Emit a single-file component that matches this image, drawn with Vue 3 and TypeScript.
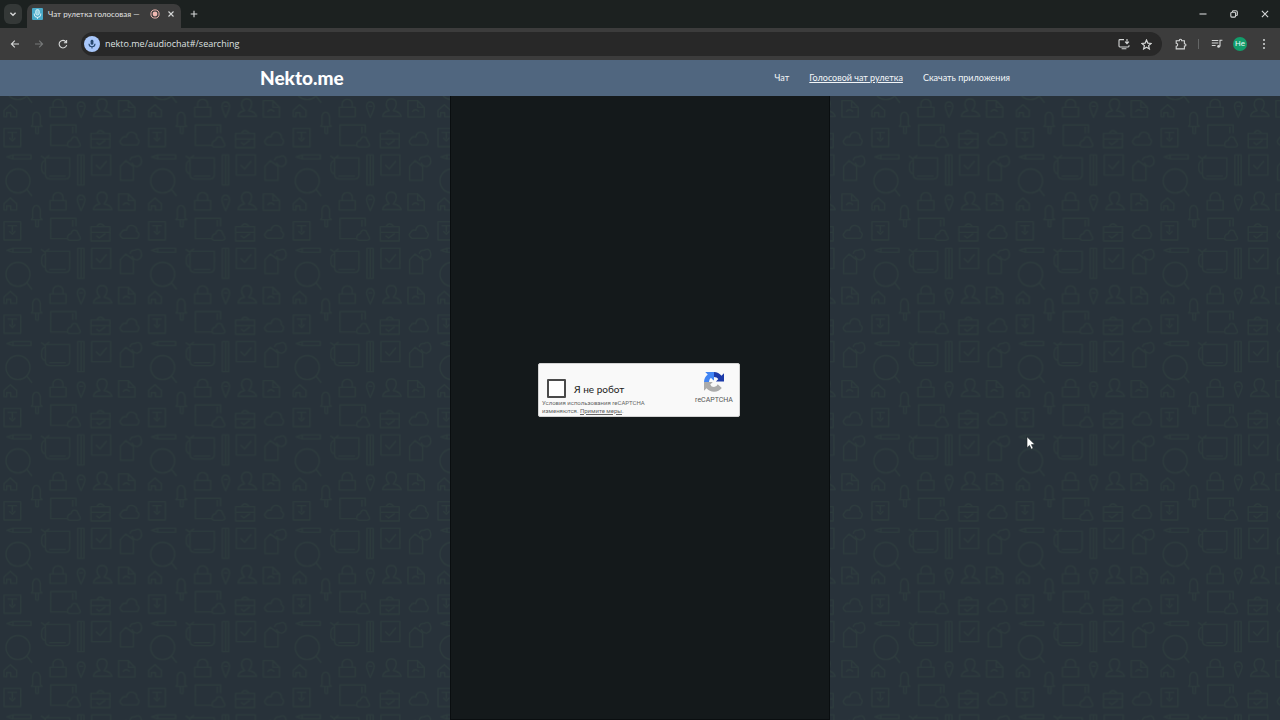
<script setup lang="ts">
import { ref } from 'vue'

interface NavLink {
  label: string
  href: string
  active: boolean
}

const address = ref('nekto.me/audiochat#/searching')
const checked = ref(false)
const links: NavLink[] = [
  { label: 'Чат', href: '#/chat', active: false },
  { label: 'Голосовой чат рулетка', href: '#/searching', active: true },
  { label: 'Скачать приложения', href: '#/apps', active: false },
]
</script>

<template>
  <div class="window">
    <div class="tabstrip">
      <button class="tab-search" aria-label="Поиск вкладок">
        <svg width="8" height="8" viewBox="0 0 8 8"><path d="M1.4 2.7 4 5.3 6.6 2.7" /></svg>
      </button>
      <div class="tab">
        <svg class="favicon" width="11" height="12" viewBox="0 0 11 12">
          <rect width="11" height="12" rx="1" fill="#48a9c8" />
          <rect x="3.7" y="1.5" width="3.6" height="5.6" rx="1.8" fill="#8fd0e2" stroke="#e2f5fa" stroke-width=".8" />
          <path d="M2.2 5.5v.6a3.3 3.3 0 0 0 6.6 0v-.6M5.5 9.2v1.6" fill="none" stroke="#e2f5fa" />
        </svg>
        <span class="tab-title">Чат рулетка голосовая —</span>
        <svg class="recording" width="10" height="10" viewBox="0 0 10 10">
          <circle cx="5" cy="5" r="4.1" fill="none" stroke="#e9b4ae" />
          <circle cx="5" cy="5" r="2.4" fill="#f0b8b1" />
        </svg>
        <button class="tab-close" aria-label="Закрыть вкладку">
          <svg width="8" height="8" viewBox="0 0 8 8"><path d="m1.5 1.5 5 5m0-5-5 5" /></svg>
        </button>
      </div>
      <button class="new-tab" aria-label="Новая вкладка">
        <svg width="8" height="8" viewBox="0 0 8 8"><path d="M4 .7v6.6M.7 4h6.6" /></svg>
      </button>
      <div class="window-buttons">
        <button aria-label="Свернуть"><svg width="8" height="8" viewBox="0 0 8 8"><path d="M.5 4h7" /></svg></button>
        <button aria-label="Восстановить">
          <svg width="8" height="8" viewBox="0 0 8 8"><rect x=".8" y="2.3" width="4.8" height="4.8" rx="1" /><path d="M2.5 1.9V1.6q0-.9.9-.9H6q1.3 0 1.3 1.3v2.7q0 .8-.8.8h-.4" /></svg>
        </button>
        <button aria-label="Закрыть"><svg width="8" height="8" viewBox="0 0 8 8"><path d="m.9.9 6.2 6.2m0-6.2L.9 7.1" /></svg></button>
      </div>
    </div>

    <div class="toolbar">
      <button aria-label="Назад"><svg width="10" height="10" viewBox="0 0 10 10"><path d="M9 5H1.5M4.8 1.6 1.4 5l3.4 3.4" /></svg></button>
      <button aria-label="Вперёд" disabled><svg width="10" height="10" viewBox="0 0 10 10"><path d="M1 5h7.5M5.2 1.6 8.6 5 5.2 8.4" /></svg></button>
      <button aria-label="Обновить"><svg width="10" height="10" viewBox="0 0 10 10"><path d="M8.1 3A3.8 3.8 0 1 0 8.7 6M8.6 1v2.7H5.9" /></svg></button>
      <div class="omnibox">
        <button class="mic" aria-label="Микрофон используется">
          <svg width="10" height="10" viewBox="0 0 10 10"><rect x="3.6" y=".8" width="2.8" height="5" rx="1.4" fill="#27496f" stroke="none" /><path d="M2 4.8a3 3 0 0 0 6 0M5 7.8v1.7" stroke="#27496f" /></svg>
        </button>
        <div class="address">
          <input v-model="address" type="text" aria-label="Адрес" spellcheck="false" />
        </div>
        <button aria-label="Установить приложение">
          <svg width="12" height="12" viewBox="0 0 12 12"><path d="M6 1.6H1.9q-.9 0-.9.9v5.6q0 .9.9.9h8.2q.9 0 .9-.9V7.2M3.6 10.7h4.8M9 1v4.3M7.1 3.7 9 5.6l1.9-1.9" /></svg>
        </button>
        <button aria-label="Добавить в закладки">
          <svg width="11" height="11" viewBox="0 0 10 10"><path d="m5 .9 1.2 2.8 3 .3-2.3 2 .7 3L5 7.4 2.4 9l.7-3L.8 4l3-.3z" /></svg>
        </button>
      </div>
      <button class="extensions" aria-label="Расширения">
        <svg width="12" height="12" viewBox="0 0 12 12"><path d="M1.2 2.8h3.1q0-1.6 1.2-1.6t1.2 1.6h2.7v2.9q1.6 0 1.6 1.2T9.4 8.1v2.8H1.2V8.3q1.5-.1 1.5-1.5T1.2 5.3z" /></svg>
      </button>
      <span class="divider"></span>
      <button class="media" aria-label="Управление медиа">
        <svg width="12" height="12" viewBox="0 0 12 12"><path d="M.8 2.5h6.5M.8 5h6.5M.8 7.5h3.8M9 8.5V2.2h2.4" /><circle cx="7.6" cy="8.4" r="1.4" fill="#d5d7d7" stroke="none" /></svg>
      </button>
      <button class="profile" aria-label="Профиль">He</button>
      <button class="menu" aria-label="Меню">
        <svg width="4" height="12" viewBox="0 0 4 12"><g fill="#d5d7d7" stroke="none"><circle cx="2" cy="2" r="1" /><circle cx="2" cy="6" r="1" /><circle cx="2" cy="10" r="1" /></g></svg>
      </button>
    </div>

    <header class="site-header">
      <div class="header-inner">
        <a class="logo" href="#/">Nekto.me</a>
        <nav>
          <a v-for="link in links" :key="link.label" :href="link.href" :class="{ active: link.active }">{{ link.label }}</a>
        </nav>
      </div>
    </header>

    <main class="page">
      <svg class="wallpaper" width="100%" height="100%" aria-hidden="true">
        <defs>
          <pattern id="doodles" width="434" height="280" patternUnits="userSpaceOnUse" patternTransform="scale(.3333)">
            <g fill="none" stroke="#2d3b3d" stroke-width="4" stroke-linejoin="round">
              <path d="M12 62V43l19-17 19 17v19H32V50H20v12z" />
              <path d="M98 86V62q2-13 11-13t12 13v24l5 5H94zM107 93v18q5 4 8 0V93" />
              <path d="M150 34h48v28h-48zM159 34V23q2-13 15-13t15 13v11" />
              <path d="M232 31q1-13 11-13t12 13q0 7-12 33-11-26-11-33zm6 0h11" />
              <path d="M280 61q2-14 20-17-10-10-9-21 2-14 15-14 15 0 15 15 0 11-9 20 20 3 24 17z" />
              <path d="M356 14h29l20 20v29h-49zm29 0v20h20M369 47q9-12 20 0" />
              <path d="M12 97h50v55H12zm11 12h28M37 109v20M28 126l9 9 9-9" />
              <path d="M152 92v-5h76v24M152 92v56h50M203 150q-3-14 10-17 5-15 17-9l7 14q10 13-4 15h-25zM218 92v20" />
              <path d="M273 112h57v43h-57zm17 0q10-17 24 0M273 129h57m-41 10 9 7 18-13" />
              <path d="M368 147q-14-8-3-19 5-8 14-5 4-18 20-14 13 4 11 17 13 8 2 21z" />
              <path d="M21 183l18-6h54v12H39zm18-6v12" />
              <circle cx="54" cy="255" r="36" />
              <circle cx="54" cy="-25" r="36" />
              <path d="m80 280 16 20M80 0l16 20" />
              <path d="M136 186h73v52q-2 11-12 11h-48q-13-2-13-14zM123 180l12 8 13-10M136 194q-14 0-11 28 3 11 11 11m12 7h49" />
              <path d="M233 177h19v90h-19zm10 0v90" />
              <path d="M275 177h57v60h-57zm13 30 12 12 20-24" />
              <path d="M361 211l16-17 23 17v42h-39zM390 193q2-11 14-10 17-9 20 8 3 16-12 21-13-1-16-12" />
            </g>
          </pattern>
        </defs>
        <rect width="100%" height="100%" fill="url(#doodles)" />
      </svg>

      <section class="chat">
        <div class="captcha">
          <div class="captcha-main">
            <label class="captcha-check">
              <input v-model="checked" type="checkbox" />
              <span>Я не робот</span>
            </label>
            <p class="terms">Условия использования reCAPTCHA изменяются. <a href="#/terms">Примите меры</a>.</p>
          </div>
          <div class="captcha-brand">
            <svg width="20" height="20" viewBox="0 0 64 64">
              <path fill="#1c3aa9" d="M64 32V4l-8 8A32 32 0 0 0 32 0v16q9 0 14 6l-8 8h26z" />
              <path fill="#4285f4" d="M32 0H4l8 8A32 32 0 0 0 0 32h16q0-9 6-14l8 8h2z" />
              <path fill="#ababab" d="M0 32v28l8-8a32 32 0 0 0 49-1L44 39q-4 9-12 9-9 0-12-8l8-8z" />
            </svg>
            <span>reCAPTCHA</span>
          </div>
        </div>
      </section>

      <svg class="cursor" width="10" height="14" viewBox="0 0 10 14" aria-hidden="true">
        <path d="M1 .8v10.9l2.5-2.3 1.8 3.8 1.9-.9-1.8-3.7h3.5z" fill="#fff" stroke="#182024" stroke-width=".6" />
      </svg>
    </main>
  </div>
</template>

<style>
html,
body {
  background: #28323a;
}
</style>

<style scoped>
.window {
  display: flex;
  flex-direction: column;
  min-height: 100vh;
  font-family: Roboto, 'Noto Sans', sans-serif;
}

button {
  display: flex;
  align-items: center;
  justify-content: center;
  flex: none;
  padding: 0;
  border: 0;
  background: none;
  color: inherit;
  font: inherit;
}

button svg {
  fill: none;
  stroke: #d5d7d7;
  stroke-width: 1.1;
}

button:disabled svg {
  stroke: #767878;
}

.tabstrip {
  display: flex;
  height: 28px;
  background: #1c2120;
}

.tab-search {
  width: 18px;
  height: 20px;
  margin: 4px 5px 0 4px;
  border-radius: 6px;
  background: #343837;
}

.tab-search svg {
  stroke-width: 1.4;
}

.tab {
  display: flex;
  align-items: center;
  width: 154px;
  height: 24px;
  box-sizing: border-box;
  margin-top: 4px;
  padding: 0 6px 4px 5px;
  border-radius: 7px 7px 0 0;
  background: #3c3c3c;
}

.favicon {
  flex: none;
}

.tab-title {
  flex: 1;
  min-width: 0;
  margin-left: 5px;
  color: #e2e3e3;
  font-family: Lato, 'Noto Sans', sans-serif;
  font-size: 8px;
  line-height: 12px;
  white-space: nowrap;
}

.recording {
  flex: none;
}

.tab-close {
  margin-left: 7px;
}

.new-tab {
  width: 20px;
  margin-left: 3px;
}

.window-buttons {
  display: flex;
  margin-left: auto;
}

.window-buttons button {
  width: 31px;
}

.toolbar {
  display: flex;
  align-items: center;
  height: 32px;
  padding: 0 4px 0 3px;
  background: #3c3c3c;
}

.toolbar > button {
  width: 24px;
  height: 24px;
}

.omnibox {
  display: flex;
  align-items: center;
  flex: 1;
  height: 24px;
  margin: 0 7px 0 6px;
  padding-right: 5px;
  border-radius: 12px;
  background: #282828;
}

.omnibox button {
  width: 22px;
  height: 22px;
}

.omnibox .mic {
  width: 16px;
  height: 16px;
  margin-left: 3px;
  border-radius: 50%;
  background: #a8c7fa;
}

.address {
  flex: 1;
  min-width: 0;
}

.address input {
  display: block;
  width: 100%;
  box-sizing: border-box;
  padding: 0 5px;
  border: 0;
  outline: 0;
  background: none;
  color: #dfe1e1;
  font-family: 'Open Sans', sans-serif;
  font-size: 9px;
  line-height: 16px;
}

.divider {
  width: 1px;
  height: 10px;
  margin: 0 6px 0 5px;
  background: #646666;
}

.toolbar .profile {
  width: 14px;
  height: 14px;
  margin: 0 5px 0 4px;
  border-radius: 50%;
  background: #129d6b;
  color: #e9f8f2;
  font-size: 8px;
  line-height: 14px;
}

.site-header {
  display: flex;
  justify-content: center;
  height: 36px;
  background: #50667f;
}

.header-inner {
  display: flex;
  align-items: center;
  justify-content: space-between;
  width: 760px;
  box-sizing: border-box;
  padding-right: 10px;
}

.logo {
  color: #fff;
  font-family: Lato, sans-serif;
  font-size: 19px;
  font-weight: 900;
  line-height: 24px;
  text-decoration: none;
}

nav {
  display: flex;
  gap: 20px;
}

nav a {
  color: #f3f6f8;
  font-family: Lato, 'Noto Sans', sans-serif;
  font-size: 9px;
  line-height: 14px;
  text-decoration: none;
}

nav a.active {
  text-decoration: underline;
}

.page {
  position: relative;
  display: flex;
  flex: 1;
  justify-content: center;
  background: #28323a;
}

.wallpaper {
  position: absolute;
  inset: 0;
}

.chat {
  position: relative;
  display: flex;
  align-items: center;
  justify-content: center;
  width: 380px;
  box-sizing: border-box;
  padding: 0 2px 36px 0;
  border: 1px solid #0a0e10;
  border-top: 0;
  background: #14191b;
}

.captcha {
  display: flex;
  justify-content: space-between;
  width: 202px;
  height: 54px;
  box-sizing: border-box;
  border: 1px solid #d3d3d3;
  border-radius: 2px;
  background: #f9f9f9;
}

.captcha-main {
  width: 126px;
  padding: 15px 0 0 3px;
}

.captcha-check {
  display: flex;
  align-items: center;
  gap: 8px;
  padding-left: 5px;
  color: #1c1c1c;
  font-family: Lato, 'Noto Sans', sans-serif;
  font-size: 10px;
  line-height: 20px;
}

.captcha-check input {
  appearance: none;
  width: 19px;
  height: 19px;
  margin: 0;
  border: 2px solid #4a4a4a;
  border-radius: 1px;
  background: #fff;
}

.captcha-check input:checked {
  background: #4285f4;
}

.terms {
  margin: 0;
  color: #666;
  font-size: 6px;
  line-height: 8px;
}

.terms a {
  color: inherit;
}

.captcha-brand {
  display: flex;
  flex-direction: column;
  align-items: center;
  gap: 3px;
  width: 50px;
  padding-top: 8px;
  color: #555;
  font-size: 7px;
  line-height: 10px;
}

.cursor {
  position: absolute;
  top: 340px;
  left: 1026px;
}
</style>
